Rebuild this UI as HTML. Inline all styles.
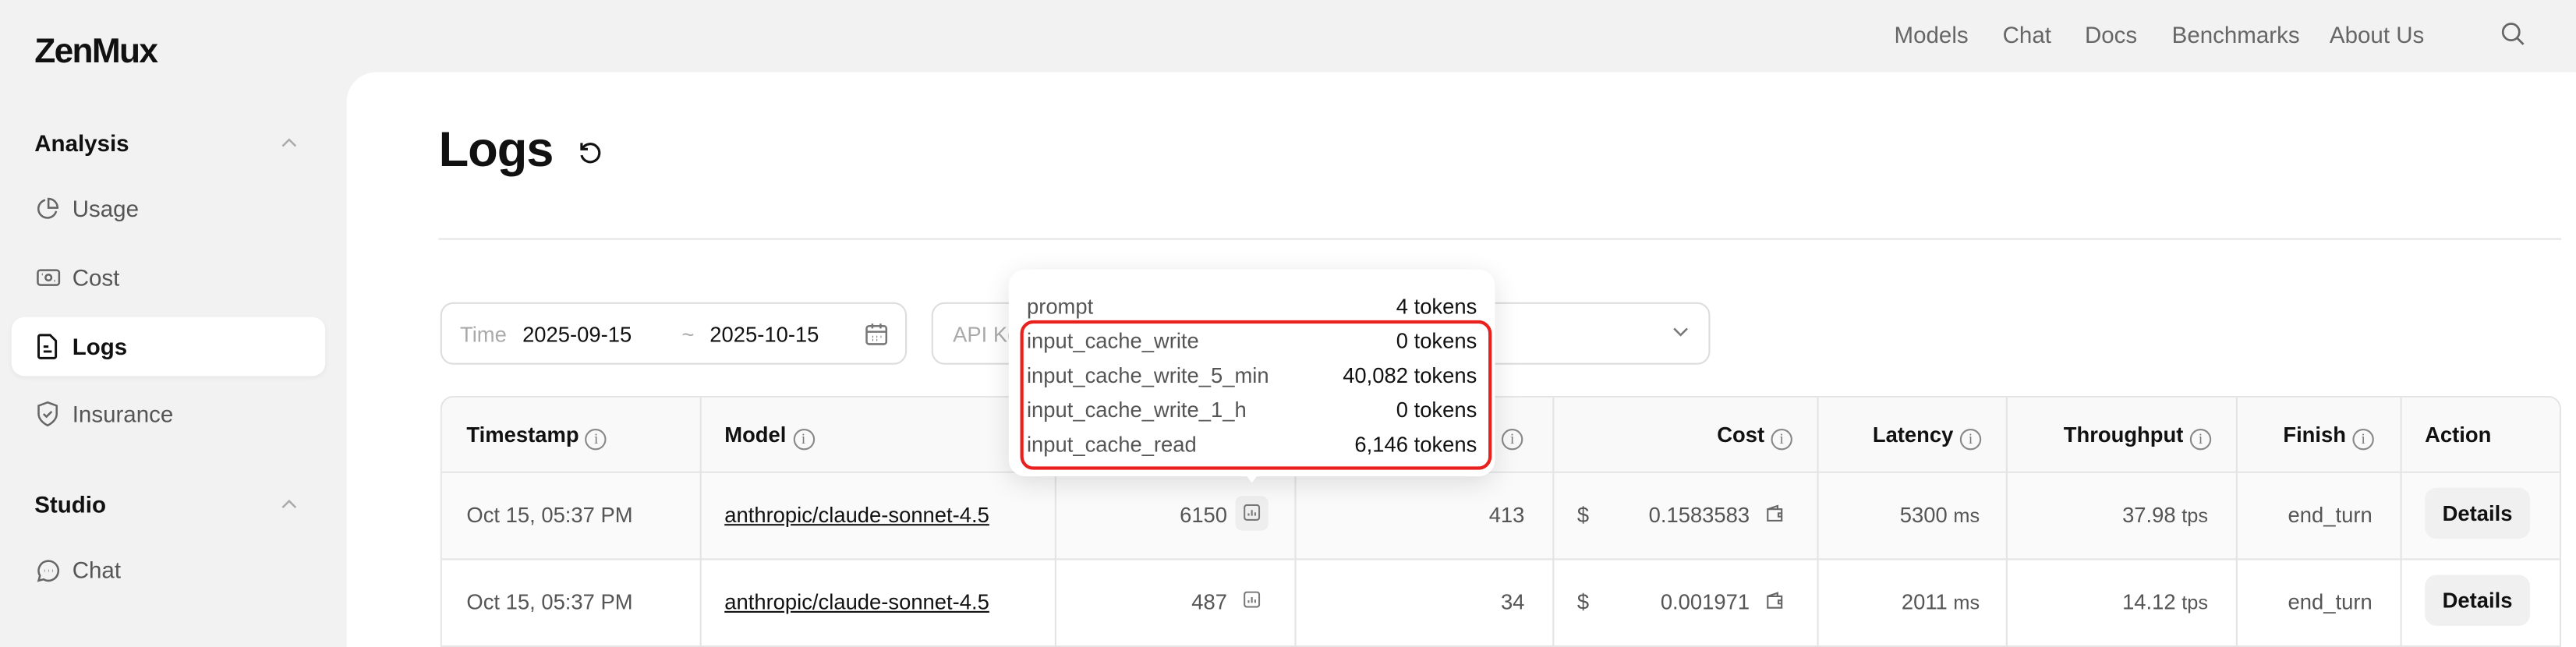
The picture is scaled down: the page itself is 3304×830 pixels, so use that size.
<!DOCTYPE html>
<html><head><meta charset="utf-8"><style>
*{box-sizing:border-box;margin:0;padding:0}
html,body{width:3304px;height:830px;overflow:hidden;background:#f2f2f2}
#s{position:absolute;left:0;top:0;width:1568px;height:393.8px;overflow:hidden;transform:scale(2.10714);transform-origin:0 0;font-family:"Liberation Sans",sans-serif;color:#111}
.a{position:absolute;white-space:nowrap}
.nav{font-size:14px;color:#666;top:13px}
.side{font-size:14px;color:#555;left:44px}
.ic{position:absolute;left:22px}
.main{position:absolute;left:211px;top:44px;right:0;bottom:0;background:#fff;border-top-left-radius:18px}
.box{position:absolute;border:1px solid #ddd;border-radius:8px;background:#fff}
.tbl{position:absolute;left:268px;top:241px;width:1291px;height:153px;border:1px solid #e4e4e4;border-bottom:none;border-radius:8px 8px 0 0;overflow:hidden}
.hd{position:absolute;left:0;top:0;right:0;height:46px;background:#f9f9f9;border-bottom:1px solid #e4e4e4}
.r1{position:absolute;left:0;top:46px;right:0;height:53px;background:#fafafa;border-bottom:1px solid #e4e4e4}
.r2{position:absolute;left:0;top:99px;right:0;height:53px;background:#fff;border-bottom:1px solid #e4e4e4}
.vl{position:absolute;top:0;bottom:0;width:1px;background:#e4e4e4}
.h{font-size:13px;font-weight:bold;color:#111;top:257px}
.c{font-size:13px;color:#555}
.t{font-size:13px}
.info{display:inline-block;width:13px;height:13px;border:1px solid #888;border-radius:50%;font-size:9px;color:#777;text-align:center;line-height:11px;font-family:"Liberation Serif",serif;vertical-align:-1px;margin-left:4px;font-weight:normal}
.btn{position:absolute;width:64px;height:31px;background:#f0f0f0;border-radius:7px;font-size:13px;font-weight:bold;text-align:center;line-height:31px;color:#111}
</style></head><body><div id="s">
<div class="a" style="left:21px;top:20px;font-size:21px;font-weight:bold;letter-spacing:-0.8px">ZenMux</div>
<div class="a nav" style="left:1153px">Models</div>
<div class="a nav" style="left:1219px">Chat</div>
<div class="a nav" style="left:1269px">Docs</div>
<div class="a nav" style="left:1322px">Benchmarks</div>
<div class="a nav" style="left:1418px">About Us</div>
<svg class="a" style="left:1522px;top:13px" width="15" height="15" viewBox="0 0 15 15" fill="none" stroke="#666" stroke-width="1.3"><circle cx="6.5" cy="6.5" r="5"/><path d="M10.2 10.2 14 14"/></svg>

<div class="a" style="left:21px;top:79px;font-size:14px;font-weight:bold">Analysis</div>
<svg class="a" style="left:171px;top:83px" width="10" height="7" viewBox="0 0 10 7" fill="none" stroke="#aaa" stroke-width="1.2"><path d="M1 6 5 2 9 6"/></svg>
<svg class="ic" style="top:120px" width="14" height="14" viewBox="0 0 14 14" fill="none" stroke="#666" stroke-width="1.2"><path d="M5.5 1.8A5.5 5.5 0 1 0 12.2 8.5"/><path d="M7.5 1v5.5H13A5.5 5.5 0 0 0 7.5 1z"/></svg>
<div class="a side" style="top:119px">Usage</div>
<svg class="ic" style="top:162px" width="15" height="14" viewBox="0 0 15 14" fill="none" stroke="#666" stroke-width="1.2"><rect x="1" y="2.5" width="13" height="9" rx="1.5"/><circle cx="7.5" cy="7" r="1.8"/><path d="M3.5 5h.5M11 9h.5"/></svg>
<div class="a side" style="top:161px">Cost</div>
<div class="a" style="left:7px;top:193px;width:191px;height:36px;background:#fff;border-radius:8px;box-shadow:0 1px 3px rgba(0,0,0,.05)"></div>
<svg class="ic" style="top:203px" width="14" height="16" viewBox="0 0 14 16" fill="none" stroke="#111" stroke-width="1.4"><path d="M2.5 1h6l3.5 3.5V14a1 1 0 0 1-1 1h-8.5a1 1 0 0 1-1-1V2a1 1 0 0 1 1-1z"/><path d="M4.5 8h3M4.5 11h5"/></svg>
<div class="a side" style="top:203px;color:#111;font-weight:bold">Logs</div>
<svg class="ic" style="top:244px" width="14" height="16" viewBox="0 0 14 16" fill="none" stroke="#666" stroke-width="1.2"><path d="M7 1 12.5 3v5c0 3-2.5 5.5-5.5 7C4 13.5 1.5 11 1.5 8V3z"/><path d="M4.5 8 6.3 9.7 9.5 6.5"/></svg>
<div class="a side" style="top:244px">Insurance</div>
<div class="a" style="left:21px;top:299px;font-size:14px;font-weight:bold">Studio</div>
<svg class="a" style="left:171px;top:303px" width="10" height="7" viewBox="0 0 10 7" fill="none" stroke="#aaa" stroke-width="1.2"><path d="M1 6 5 2 9 6"/></svg>
<svg class="ic" style="top:340px" width="15" height="15" viewBox="0 0 15 15" fill="none" stroke="#666" stroke-width="1.2"><path d="M7.5 1.5a6 6 0 1 1-3 11.2L1.5 13.5l.8-3A6 6 0 0 1 7.5 1.5z"/><path d="M5 7.5h.3M7.4 7.5h.3M9.8 7.5h.3" stroke-width="1.5"/></svg>
<div class="a side" style="top:339px">Chat</div>

<div class="main"></div>
<div class="a" style="left:267px;top:75px;font-size:30px;font-weight:bold;letter-spacing:-0.5px">Logs</div>
<svg class="a" style="left:351px;top:85px" width="16" height="16" viewBox="0 0 16 16" fill="none" stroke="#111" stroke-width="1.5"><path d="M3.5 5.5A5.5 5.5 0 1 1 3 9.5"/><path d="M3 2v3.8h3.8"/></svg>
<div class="a" style="left:267px;top:145px;width:1292px;height:1px;background:#e4e4e4"></div>

<div class="box" style="left:268px;top:184px;width:284px;height:38px"></div>
<div class="a t" style="left:280px;top:196px;color:#aaa">Time</div>
<div class="a t" style="left:318px;top:196px">2025-09-15</div>
<div class="a t" style="left:415px;top:196px;color:#aaa">~</div>
<div class="a t" style="left:432px;top:196px">2025-10-15</div>
<svg class="a" style="left:526px;top:196px" width="15" height="15" viewBox="0 0 15 15" fill="none" stroke="#777" stroke-width="1.2"><rect x="1.5" y="2.5" width="12" height="11" rx="1.5"/><path d="M1.5 6h12M5 1v3M10 1v3M5 9h.5M7.5 9h.5M10 9h.5M5 11h.5M7.5 11h.5"/></svg>
<div class="box" style="left:567px;top:184px;width:474px;height:38px"></div>
<div class="a t" style="left:580px;top:196px;color:#aaa">API Key</div>
<svg class="a" style="left:1018px;top:199px" width="10" height="7" viewBox="0 0 10 7" fill="none" stroke="#777" stroke-width="1.2"><path d="M1 1 5 5 9 1"/></svg>

<div class="tbl">
<div class="hd"></div><div class="r1"></div><div class="r2"></div>
<div class="vl" style="left:157px"></div><div class="vl" style="left:373px"></div><div class="vl" style="left:519px"></div><div class="vl" style="left:676px"></div><div class="vl" style="left:837px"></div><div class="vl" style="left:952px"></div><div class="vl" style="left:1092px"></div><div class="vl" style="left:1192px"></div>
</div>
<div class="a h" style="left:284px">Timestamp<span class="info">i</span></div>
<div class="a h" style="left:441px">Model<span class="info">i</span></div>
<div class="a h" style="left:653px">Input<span class="info">i</span></div>
<div class="a h" style="left:910px"><span class="info">i</span></div>
<div class="a h" style="right:477px">Cost<span class="info">i</span></div>
<div class="a h" style="right:362px">Latency<span class="info">i</span></div>
<div class="a h" style="right:222px">Throughput<span class="info">i</span></div>
<div class="a h" style="right:123px">Finish<span class="info">i</span></div>
<div class="a h" style="left:1476px">Action</div>

<div class="a c" style="left:284px;top:306px">Oct 15, 05:37 PM</div>
<div class="a c" style="left:284px;top:359px">Oct 15, 05:37 PM</div>
<div class="a t" style="left:441px;top:306px;text-decoration:underline">anthropic/claude-sonnet-4.5</div>
<div class="a t" style="left:441px;top:359px;text-decoration:underline">anthropic/claude-sonnet-4.5</div>
<div class="a c" style="right:821px;top:306px">6150</div>
<div class="a c" style="right:821px;top:359px">487</div>
<div class="a" style="left:752px;top:302px;width:20px;height:21px;background:#eee;border-radius:4px"></div>
<svg class="a" style="left:757px;top:307px" width="10" height="10" viewBox="0 0 10 10" fill="none" stroke="#777" stroke-width="1"><rect x=".5" y=".5" width="9" height="9" rx="1.5"/><path d="M3 7V5.5M5 7V3.5M7 7V5"/></svg>
<svg class="a" style="left:757px;top:360px" width="10" height="10" viewBox="0 0 10 10" fill="none" stroke="#777" stroke-width="1"><rect x=".5" y=".5" width="9" height="9" rx="1.5"/><path d="M3 7V5.5M5 7V3.5M7 7V5"/></svg>
<div class="a c" style="right:640px;top:306px">413</div>
<div class="a c" style="right:640px;top:359px">34</div>
<div class="a c" style="left:960px;top:306px">$</div>
<div class="a c" style="left:960px;top:359px">$</div>
<div class="a c" style="right:503px;top:306px">0.1583583</div>
<div class="a c" style="right:503px;top:359px">0.001971</div>
<svg class="a" style="left:1075px;top:307px" width="11" height="11" viewBox="0 0 11 11" fill="none" stroke="#666" stroke-width="1"><path d="M1 3h8.5v7H1zM1 3l6-2v2"/><path d="M9.5 5.5H7.5v2h2"/></svg>
<svg class="a" style="left:1075px;top:360px" width="11" height="11" viewBox="0 0 11 11" fill="none" stroke="#666" stroke-width="1"><path d="M1 3h8.5v7H1zM1 3l6-2v2"/><path d="M9.5 5.5H7.5v2h2"/></svg>
<div class="a c" style="right:363px;top:306px">5300 <span style="font-size:12px">ms</span></div>
<div class="a c" style="right:363px;top:359px">2011 <span style="font-size:12px">ms</span></div>
<div class="a c" style="right:224px;top:306px">37.98 <span style="font-size:12px">tps</span></div>
<div class="a c" style="right:224px;top:359px">14.12 <span style="font-size:12px">tps</span></div>
<div class="a c" style="right:124px;top:306px">end_turn</div>
<div class="a c" style="right:124px;top:359px">end_turn</div>
<div class="btn" style="left:1476px;top:297px">Details</div>
<div class="btn" style="left:1476px;top:350px">Details</div>

<div class="a" style="left:614px;top:164px;width:296px;height:126px;background:#fff;border-radius:10px;box-shadow:0 4px 16px rgba(0,0,0,.12)"></div>
<div class="a" style="left:756px;top:286px;width:0;height:0;border-left:6px solid transparent;border-right:6px solid transparent;border-top:8px solid #fff"></div>
<div class="a" style="left:621px;top:195px;width:287px;height:91px;border:2px solid #e8201e;border-radius:8px"></div>
<div class="a t" style="left:625px;top:179px;color:#555">prompt</div><div class="a t" style="right:669px;top:179px">4 tokens</div>
<div class="a t" style="left:625px;top:200px;color:#555">input_cache_write</div><div class="a t" style="right:669px;top:200px">0 tokens</div>
<div class="a t" style="left:625px;top:221px;color:#555">input_cache_write_5_min</div><div class="a t" style="right:669px;top:221px">40,082 tokens</div>
<div class="a t" style="left:625px;top:242px;color:#555">input_cache_write_1_h</div><div class="a t" style="right:669px;top:242px">0 tokens</div>
<div class="a t" style="left:625px;top:263px;color:#555">input_cache_read</div><div class="a t" style="right:669px;top:263px">6,146 tokens</div>
</div></body></html>
